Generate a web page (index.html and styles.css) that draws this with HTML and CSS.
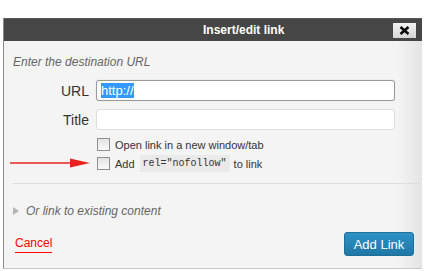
FILE: index.html
```html
<!DOCTYPE html>
<html lang="en">
<head>
  <meta charset="utf-8" />
  <title>Insert/edit link</title>
  <link rel="stylesheet" href="styles.css">
</head>
<body>
  <div class="dialog">
    <div class="titlebar">
      <span class="title">Insert/edit link</span>
      <button class="close" type="button">
        <svg width="11" height="9" viewBox="0 0 11 9"><path d="M1.5 1L9.5 8M9.5 1L1.5 8" stroke="#000" stroke-width="2.4"/></svg>
      </button>
    </div>
    <div class="content">
      <p class="intro">Enter the destination URL</p>
      <div class="field">
        <label>URL</label>
        <div class="input url"><span class="sel">http://</span></div>
      </div>
      <div class="field">
        <label>Title</label>
        <div class="input"></div>
      </div>
      <div class="options">
        <div class="check"><span class="box"></span>Open link in a new window/tab</div>
        <div class="check nofollow">
          <svg class="arrow" width="80" height="10" viewBox="0 0 80 10"><path d="M0 5H66" stroke="#e8231f" stroke-width="1.6"/><path d="M60 0.5L80 5L60 9.5Z" fill="#e8231f"/></svg>
          <span class="box"></span>Add <code>rel="nofollow"</code> to link
        </div>
      </div>
      <div class="existing"><span class="tri"></span>Or link to existing content</div>
      <div class="actions">
        <a class="cancel" href="#">Cancel</a>
        <button class="submit" type="button">Add Link</button>
      </div>
    </div>
  </div>
</body>
</html>
```

FILE: styles.css
```css
* {
  margin: 0;
  padding: 0;
  box-sizing: border-box;
}

body {
  background: #fff;
  font-family: 'Liberation Sans', Arial, sans-serif;
  font-size: 13px;
  color: #333;
}

.dialog {
  width: 419px;
  margin: 18px 0 0 3px;
  border-left: 1px solid #8a8a8a;
  border-bottom: 1px solid #c8c8c8;
}

.titlebar {
  display: flex;
  align-items: center;
  height: 23px;
  padding-left: 199px;
  background: #464646;
  border-top: 1px solid #5a5a5a;

  .title {
    flex: 1;
    color: #fff;
    font-weight: bold;
    font-size: 12px;
  }
}

.close {
  display: flex;
  align-items: center;
  justify-content: center;
  width: 23px;
  height: 15px;
  margin-right: 6px;
  border: none;
  background: linear-gradient(#f2f2f2, #d6d6d6);
}

.content {
  height: 227px;
  padding: 14px 0 0 9px;
  background: linear-gradient(to right, #f4f4f4 94%, #e4e4e4 100%);
}

.intro {
  color: #666;
  font-style: italic;
  font-size: 12px;
  height: 15px;
  line-height: 15px;
}

.field {
  display: flex;
  align-items: center;
  margin-top: 10px;
  height: 21px;

  label {
    width: 83px;
    text-align: right;
    padding-right: 7px;
    font-size: 14px;
    color: #333;
  }

  & + .field {
    margin-top: 8px;
  }
}

.input {
  width: 299px;
  height: 21px;
  background: #fff;
  border: 1px solid #ddd;
  border-radius: 3px;
  padding: 2px 4px;
  font-size: 13px;
  line-height: 15px;

  &.url {
    border-color: #9a9a9a;
    box-shadow: 0 0 1px #bbb;
  }
}

.sel {
  background: #3399ff;
  color: #fff;
}

.options {
  margin-top: 5px;
  padding-left: 84px;
  height: 49px;
  border-bottom: 1px solid #dedede;
  margin-right: 2px;
}

.check {
  position: relative;
  display: flex;
  align-items: center;
  height: 19px;
  font-size: 11px;
  color: #333;

  .box {
    width: 13px;
    height: 13px;
    margin-right: 5px;
    border: 1px solid #8f8f8f;
    background: linear-gradient(#e2e2e2, #fafafa);
  }

  code {
    font-family: 'Liberation Mono', 'Courier New', monospace;
    font-size: 10px;
    background: #eaeaea;
    padding: 3px 3px;
    margin: 0 4px 0 5px;
  }
}

.arrow {
  position: absolute;
  left: -87px;
  top: 4px;
}

.existing {
  display: flex;
  align-items: center;
  margin-top: 19px;
  height: 16px;
  color: #666;
  font-style: italic;
  font-size: 12px;

  .tri {
    width: 0;
    height: 0;
    margin-right: 7px;
    border-left: 6px solid #b5b5b5;
    border-top: 4px solid transparent;
    border-bottom: 4px solid transparent;
  }
}

.actions {
  display: flex;
  align-items: center;
  justify-content: space-between;
  margin-top: 13px;
  padding: 0 8px 0 2px;
}

.cancel {
  color: #f00;
  font-size: 12px;
  text-decoration: none;
  border-bottom: 1.5px solid #f00;
  padding-bottom: 2px;
}

.submit {
  width: 70px;
  height: 24px;
  border: 1px solid #1f6f99;
  border-radius: 3px;
  background: linear-gradient(#2e91c6, #1f77a6);
  color: #fff;
  font-family: 'Liberation Sans', Arial, sans-serif;
  font-size: 13px;
}
```
